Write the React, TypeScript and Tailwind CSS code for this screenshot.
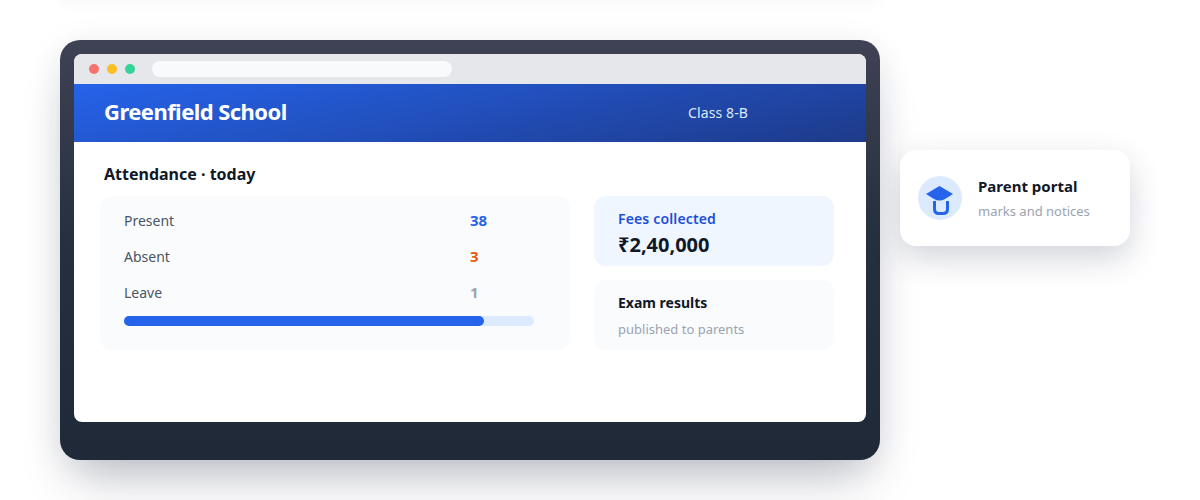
const font = { fontFamily: '"Noto Sans", sans-serif' };

function GradCap() {
  return (
    <svg width="44" height="44" viewBox="0 0 44 44" fill="none">
      <path d="M21.5 10 L35 18 L27 23 Q21.5 26 16 23 L8 18 Z" fill="#2563eb" />
      <path d="M16.5 25 V33 Q16.5 37.5 21 37.5 H25 Q29.5 37.5 29.5 33 V25" stroke="#2563eb" strokeWidth="3" />
    </svg>
  );
}

function StatRow({ label, value, color }: { label: string; value: string; color: string }) {
  return (
    <div className="flex h-[36px] items-center text-sm">
      <span className="w-[346px] text-[#4b5563]">{label}</span>
      <span className={`text-[15px] font-bold ${color}`}>{value}</span>
    </div>
  );
}

export default function App() {
  return (
    <div className="h-[500px] w-[1200px] overflow-hidden bg-white pl-[60px]" style={font}>
      {/* edge of the section above, only its shadow shows */}
      <div className="-mt-[20px] mb-[40px] h-[20px] w-[820px] bg-white shadow-[0_4px_14px_rgba(31,41,55,0.03)]" />

      <div className="flex items-start">
        {/* Laptop frame */}
        <div className="h-[420px] w-[820px] rounded-[20px] bg-gradient-to-b from-[#3f4254] via-[#252f3e] to-[#1f2937] p-[14px] shadow-[0_30px_50px_-14px_rgba(31,41,70,0.28),0_4px_32px_rgba(31,41,55,0.08)]">
          <div className="h-[368px] overflow-hidden rounded-[8px] bg-white">
            <div className="flex h-[30px] items-center gap-2 bg-[#e5e7eb] pl-[15px]">
              <span className="h-2.5 w-2.5 rounded-full bg-[#f87171]" />
              <span className="h-2.5 w-2.5 rounded-full bg-[#fbbf24]" />
              <span className="h-2.5 w-2.5 rounded-full bg-[#34d399]" />
              <span className="ml-[9px] h-4 w-[300px] rounded-full bg-[#f9fafb]" />
            </div>
            <div className="flex h-[58px] items-center justify-between bg-[linear-gradient(168deg,#2563eb,#1e3a8a)] pl-[30px] pr-[118px]">
              <h1 className="-mt-[3px] text-[22px] font-bold tracking-[-0.55px] text-white">Greenfield School</h1>
              <span className="text-sm tracking-[0.1px] text-[#dbeafe]">Class 8-B</span>
            </div>
            <div className="px-[26px] pt-[20px]">
              <h2 className="ml-[4px] text-base leading-[24px] font-bold text-[#111827]">Attendance · today</h2>
              <div className="mt-[10px] flex gap-6">
                <div className="h-[154px] w-[470px] rounded-xl bg-[#f9fbfd] px-6 pt-[7px]">
                  <StatRow label="Present" value="38" color="text-[#2563eb]" />
                  <StatRow label="Absent" value="3" color="text-[#ea580c]" />
                  <StatRow label="Leave" value="1" color="text-[#9ca3af]" />
                  <div className="mt-[5px] h-2.5 w-[410px] rounded-full bg-[#dbeafe]">
                    <div className="h-2.5 w-[360px] rounded-full bg-[#2563eb]" />
                  </div>
                </div>
                <div className="flex w-[240px] flex-col gap-[14px]">
                  <div className="h-[70px] rounded-xl bg-[#eff6ff] px-6 pt-[13px]">
                    <div className="text-sm leading-[20px] font-semibold tracking-[0.15px] text-[#1d4ed8]">Fees collected</div>
                    <div className="mt-[2px] text-xl leading-[27px] font-bold text-[#111827]">₹2,40,000</div>
                  </div>
                  <div className="h-[70px] rounded-xl bg-[#f9fbfd] px-6 pt-[13px]">
                    <div className="text-sm leading-[20px] font-bold text-[#111827]">Exam results</div>
                    <div className="mt-[7px] text-[13px] leading-[18px] text-[#9ca3af]">published to parents</div>
                  </div>
                </div>
              </div>
            </div>
          </div>
        </div>

        {/* Floating card */}
        <div className="mt-[110px] ml-[20px] flex h-[96px] w-[230px] items-center gap-4 rounded-2xl bg-white pl-[18px] shadow-[0_12px_32px_rgba(31,41,70,0.2)]">
          <div className="flex h-11 w-11 items-center justify-center rounded-full bg-[#dbeafe]">
            <GradCap />
          </div>
          <div>
            <div className="text-[15px] leading-[20px] font-bold text-[#111827]">Parent portal</div>
            <div className="mt-[6px] text-[13px] leading-[18px] text-[#9ca3af]">marks and notices</div>
          </div>
        </div>
      </div>

      {/* top of the next section */}
      <div className="mt-[46px] h-[20px] w-[820px] bg-white shadow-[0_0_12px_rgba(31,41,55,0.04)]" />
    </div>
  );
}
